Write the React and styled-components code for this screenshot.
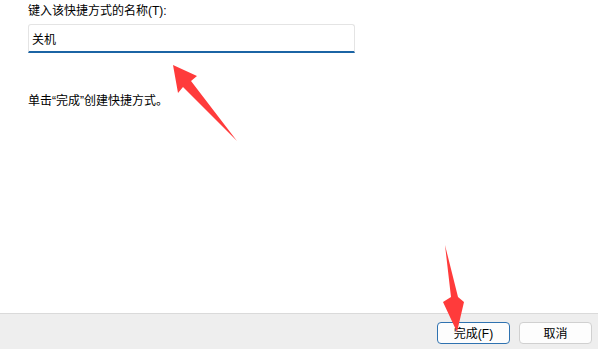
import React from "react";
import styled, { createGlobalStyle } from "styled-components";

const Global = createGlobalStyle`
  html, body { margin: 0; padding: 0; background: #ffffff; }
  body { font-family: "Liberation Sans", "Noto Sans CJK SC", sans-serif; font-size: 12px; color: #000; }
  #root { width: 598px; height: 349px; }
`;

const Page = styled.div`
  position: relative;
  width: 598px;
  height: 349px;
  display: flex;
  flex-direction: column;
  background: #fff;
  overflow: hidden;
`;

const Body = styled.div`
  flex: 1;
  display: flex;
  flex-direction: column;
  padding: 3px 0 0 28px;
`;

const Label = styled.label`
  font-size: 12px;
  line-height: 17px;
  height: 17px;
  color: #000;
`;

const InputBox = styled.div`
  margin-top: 4px;
  width: 327px;
  height: 29px;
  box-sizing: border-box;
  border: 1px solid #e4e4e4;
  border-bottom: 2px solid #1b64a4;
  border-radius: 3px 3px 0 0;
  display: flex;
  align-items: center;
  padding-left: 3px;
  font-size: 12px;
  background: #fff;
`;

const Hint = styled.p`
  margin: 40px 0 0;
  font-size: 12px;
  line-height: 17px;
`;

const Footer = styled.div`
  height: 35px;
  background: #eeeeee;
  border-top: 1px solid #dadada;
  display: flex;
  justify-content: flex-end;
  align-items: center;
  gap: 9px;
  padding-right: 6px;
`;

const Button = styled.button`
  width: 73px;
  height: 22px;
  box-sizing: border-box;
  border-radius: 4px;
  background: #fdfdfd;
  border: 1px solid ${(p) => (p.$primary ? "#2f72b0" : "#d0d0d0")};
  font-family: inherit;
  font-size: 12px;
  color: #000;
  padding: 0;
  display: flex;
  align-items: center;
  justify-content: center;
  margin-top: 2px;
`;

const Overlay = styled.svg`
  position: absolute;
  left: 0;
  top: 0;
  pointer-events: none;
`;

export default function App() {
  return (
    <Page>
      <Global />
      <Body>
        <Label>键入该快捷方式的名称(T):</Label>
        <InputBox>关机</InputBox>
        <Hint>单击“完成”创建快捷方式。</Hint>
      </Body>
      <Footer>
        <Button $primary>完成(F)</Button>
        <Button>取消</Button>
      </Footer>
      <Overlay width="598" height="349" viewBox="0 0 598 349">
        <polygon
          points="173,65 197,76 191,81 237,141 183,87 178,93"
          fill="#ff3b3b"
        />
        <polygon
          points="445,245 451,297 443,302 457,332 464,302 458,297"
          fill="#ff3b3b"
        />
      </Overlay>
    </Page>
  );
}
